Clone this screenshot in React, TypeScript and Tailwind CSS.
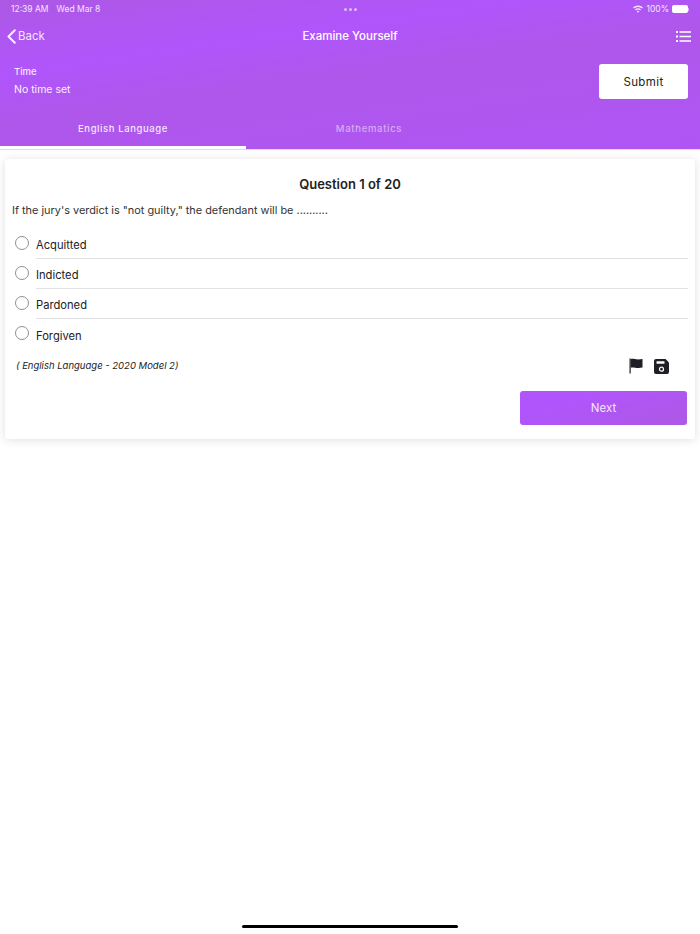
const options = ["Acquitted", "Indicted", "Pardoned", "Forgiven"]

function BackChevron() {
  return (
    <svg width="9" height="15" viewBox="0 0 9 15" fill="none" stroke="#f8f0fe" strokeWidth="2" strokeLinecap="round" strokeLinejoin="round">
      <path d="M7.8 1.2L1.5 7.5L7.8 13.8" />
    </svg>
  )
}

function ListIcon() {
  return (
    <svg width="15" height="11" viewBox="0 0 15 11" fill="white">
      <rect x="0" y="0" width="2" height="2" />
      <rect x="3.5" y="0.25" width="11.5" height="1.5" />
      <rect x="0" y="4.5" width="2" height="2" />
      <rect x="3.5" y="4.75" width="11.5" height="1.5" />
      <rect x="0" y="9" width="2" height="2" />
      <rect x="3.5" y="9.25" width="11.5" height="1.5" />
    </svg>
  )
}

function WifiIcon() {
  return (
    <svg width="10" height="8" viewBox="0 0 10 8" fill="#f3e6fd">
      <path d="M0 2.6A7 7 0 0 1 10 2.6L9 3.6A5.6 5.6 0 0 0 1 3.6Z" />
      <path d="M2 4.6A4.2 4.2 0 0 1 8 4.6L7 5.6A2.8 2.8 0 0 0 3 5.6Z" />
      <path d="M3.8 6.4A1.7 1.7 0 0 1 6.2 6.4L5 7.8Z" />
    </svg>
  )
}

function FlagIcon() {
  return (
    <svg width="14" height="16" viewBox="0 0 14 16" fill="#1f1f26">
      <rect x="0.5" y="0.5" width="1.2" height="15" />
      <path d="M1.7 1.2C4.5 0 6.5 2.4 13.5 1V9.6C7.5 11 4.5 8.6 1.7 9.8Z" />
    </svg>
  )
}

function SaveIcon() {
  return (
    <svg width="15" height="15" viewBox="0 0 15 15">
      <path d="M2 0H11.5L15 3.5V13A2 2 0 0 1 13 15H2A2 2 0 0 1 0 13V2A2 2 0 0 1 2 0Z" fill="#1f1f26" />
      <rect x="2.5" y="2.2" width="8" height="2.6" rx="0.5" fill="white" />
      <circle cx="7.5" cy="10.2" r="2" fill="none" stroke="white" strokeWidth="1.2" />
    </svg>
  )
}

export default function App() {
  return (
    <div className="relative h-[934px] w-[700px] overflow-hidden bg-white font-['Inter',sans-serif]">
      <div className="h-[150px] bg-[linear-gradient(172deg,#ad58e4_0%,#b055fb_30%,#ae57ea_50%,#b055f5_100%)] border-b border-[#ecd2fb]">
        <div className="flex h-[17px] items-center justify-between pl-[11px] pr-[11px] pt-[1px] text-[8.5px] text-[#f3e6fd]">
          <div className="flex w-[150px] gap-2">
            <span>12:39 AM</span>
            <span>Wed Mar 8</span>
          </div>
          <div className="flex gap-[2px]">
            <span className="h-[3px] w-[3px] rounded-full bg-white/60" />
            <span className="h-[3px] w-[3px] rounded-full bg-white/60" />
            <span className="h-[3px] w-[3px] rounded-full bg-white/60" />
          </div>
          <div className="flex w-[150px] items-center justify-end gap-[2px]">
            <WifiIcon />
            <span className="ml-px">100%</span>
            <div className="ml-px flex items-center">
              <div className="h-[8px] w-[16px] rounded-[2px] bg-white" />
              <div className="h-[3px] w-[1px] bg-white/50" />
            </div>
          </div>
        </div>

        <div className="flex h-[37px] items-center justify-between px-[2px] pt-[2px] text-white">
          <div className="flex w-[100px] items-center gap-[2px] pl-[5px] text-[11.5px] text-[#f3e6fd]">
            <BackChevron />
            <span>Back</span>
          </div>
          <span className="text-[11.5px] font-medium">Examine Yourself</span>
          <div className="flex w-[100px] justify-end pr-[7px]">
            <ListIcon />
          </div>
        </div>

        <div className="flex h-[54px] items-start justify-between pl-[14px] pr-[12px] pt-[11px]">
          <div className="flex flex-col gap-[5px] pt-[1px]">
            <span className="text-[9.5px] font-medium leading-[12px] text-[#f3e6fd]">Time</span>
            <span className="text-[10.5px] leading-[14px] text-[#f8f0fe]">No time set</span>
          </div>
          <button className="-mt-[1px] h-[35px] w-[89px] rounded-[3px] bg-white pt-[2px] text-[11.5px] tracking-[0.4px] text-[#222]">
            Submit
          </button>
        </div>

        <div className="flex h-[41px]">
          <div className="flex h-[41px] w-[246px] items-center justify-center border-b-[3px] border-white pt-[5px] text-[9.5px] font-medium tracking-[0.6px] text-[#f3e6fd]">
            English Language
          </div>
          <div className="flex h-[41px] w-[246px] items-center justify-center pb-[1px] pt-[2px] text-[9.5px] font-medium tracking-[0.7px] text-white/50">
            Mathematics
          </div>
        </div>
      </div>

      <div className="mx-[5px] mt-[9px] h-[280px] rounded-[3px] bg-white px-[7px] pt-[17px] shadow-[0_1px_10px_rgba(0,0,0,0.13)]">
        <h1 className="text-center text-[13px] font-semibold leading-[16px] text-[#222]">Question 1 of 20</h1>
        <p className="mt-[11px] text-[10.9px] leading-[14px] text-[#333]">If the jury's verdict is "not guilty," the defendant will be ..........</p>

        <div className="mt-[12px]">
          {options.map((option, i) => (
            <div key={option} className="flex h-[30px] items-center pl-[3px]">
              <span className="-mt-[2px] mr-[7px] h-[14px] w-[14px] shrink-0 rounded-full border-[1.5px] border-[#909090]" />
              <div className={`flex h-[30px] flex-1 items-center pt-[4px] text-[11.2px] text-[#222] ${i < 3 ? "border-b border-[#e2e2e2]" : ""}`}>
                {option}
              </div>
            </div>
          ))}
        </div>

        <div className="mt-[4px] flex h-[26px] items-center justify-between pl-[4px] pr-[19px]">
          <span className="text-[9.5px] italic text-[#222]">( English Language - 2020 Model 2)</span>
          <div className="flex items-center gap-[11px]">
            <FlagIcon />
            <SaveIcon />
          </div>
        </div>

        <div className="mt-[12px] flex justify-end pr-px">
          <button className="h-[34px] w-[167px] rounded-[3px] bg-[linear-gradient(160deg,#b055fb_30%,#ad58e4_100%)] pt-[1px] text-[11.5px] text-[#f3e6fd]">
            Next
          </button>
        </div>
      </div>

      <div className="absolute bottom-[6px] left-[242px] h-[3px] w-[216px] rounded-full bg-black" />
    </div>
  )
}
